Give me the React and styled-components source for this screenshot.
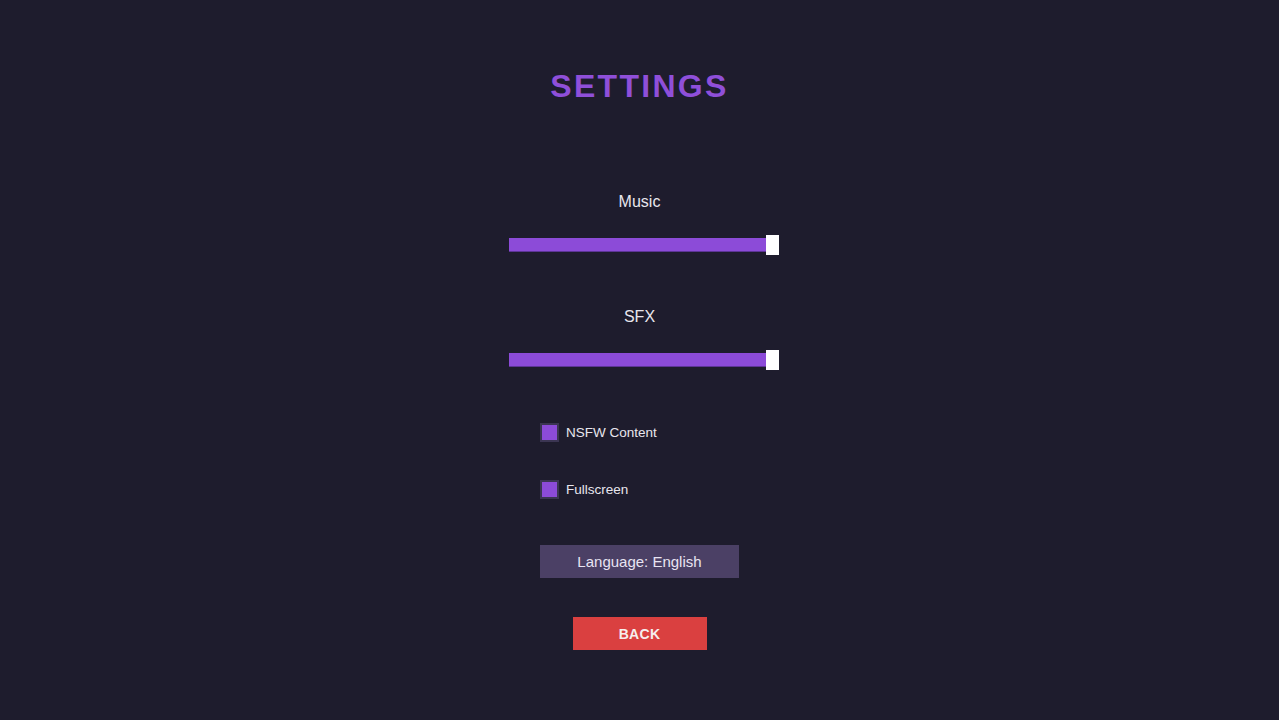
import React, { useState } from "react";
import styled, { createGlobalStyle } from "styled-components";

const GlobalStyle = createGlobalStyle`
  html, body {
    margin: 0;
    padding: 0;
    background: #1e1c2d;
  }
  body {
    font-family: "Liberation Sans", Arial, sans-serif;
  }
`;

const Page = styled.div`
  width: 100%;
  height: 720px;
  background: #1e1c2d;
  display: flex;
  flex-direction: column;
  align-items: center;
  padding-top: 70px;
  box-sizing: border-box;
`;

const Title = styled.h1`
  margin: 0 0 92px;
  font-size: 32px;
  line-height: 32px;
  font-weight: 700;
  letter-spacing: 2.3px;
  color: #8f4fd9;
`;

const SliderGroup = styled.div`
  display: flex;
  flex-direction: column;
  align-items: center;
  margin-bottom: ${(p) => p.$after}px;
`;

const Label = styled.div`
  font-size: 16px;
  line-height: 16px;
  color: #e8e6ee;
  margin-bottom: 25px;
`;

const Track = styled.div`
  position: relative;
  width: 270px;
  height: 20px;
  margin-left: 8px;
  display: flex;
  align-items: center;
`;

const Fill = styled.div`
  height: 14px;
  background: #8c4bd8;
  border-bottom: 1px solid #5d3596;
  box-sizing: border-box;
`;

const Thumb = styled.div`
  position: absolute;
  top: 0;
  width: 13px;
  height: 20px;
  background: #ffffff;
`;

const Options = styled.div`
  width: 199px;
  display: flex;
  flex-direction: column;
  gap: 38px;
  margin-bottom: 46px;
`;

const CheckRow = styled.label`
  display: flex;
  align-items: center;
  gap: 7px;
  height: 19px;
  cursor: pointer;
`;

const Box = styled.span`
  width: 19px;
  height: 19px;
  box-sizing: border-box;
  border: 2px solid #3b3552;
  background: ${(p) => (p.$on ? "#8c4bd8" : "transparent")};
`;

const CheckText = styled.span`
  font-size: 13.5px;
  color: #e8e6ee;
`;

const Button = styled.button`
  border: none;
  margin: 0;
  padding: 0;
  height: 33px;
  font-family: "Liberation Sans", Arial, sans-serif;
  cursor: pointer;
  width: ${(p) => p.$w}px;
  background: ${(p) => p.$bg};
  margin-bottom: ${(p) => p.$after || 0}px;
`;

const LangText = styled.span`
  font-size: 15px;
  color: #e8e4f2;
`;

const BackText = styled.span`
  font-size: 14px;
  font-weight: 700;
  letter-spacing: 0.3px;
  color: #f6eeee;
`;

function VolumeSlider({ label, value, after }) {
  const width = 270;
  const thumb = 13;
  const pos = ((width - thumb) * value) / 100;
  return (
    <SliderGroup $after={after}>
      <Label>{label}</Label>
      <Track>
        <Fill style={{ width: pos + 1 }} />
        <Thumb style={{ left: pos }} />
      </Track>
    </SliderGroup>
  );
}

function Check({ label, checked, onToggle }) {
  return (
    <CheckRow onClick={onToggle}>
      <Box $on={checked} />
      <CheckText>{label}</CheckText>
    </CheckRow>
  );
}

export default function App() {
  const [nsfw, setNsfw] = useState(true);
  const [full, setFull] = useState(true);

  return (
    <>
      <GlobalStyle />
      <Page>
        <Title>SETTINGS</Title>
        <VolumeSlider label="Music" value={100} after={54} />
        <VolumeSlider label="SFX" value={100} after={53} />
        <Options>
          <Check label="NSFW Content" checked={nsfw} onToggle={() => setNsfw(!nsfw)} />
          <Check label="Fullscreen" checked={full} onToggle={() => setFull(!full)} />
        </Options>
        <Button $w={199} $bg="#4b4065" $after={39}>
          <LangText>Language: English</LangText>
        </Button>
        <Button $w={134} $bg="#da4040">
          <BackText>BACK</BackText>
        </Button>
      </Page>
    </>
  );
}
